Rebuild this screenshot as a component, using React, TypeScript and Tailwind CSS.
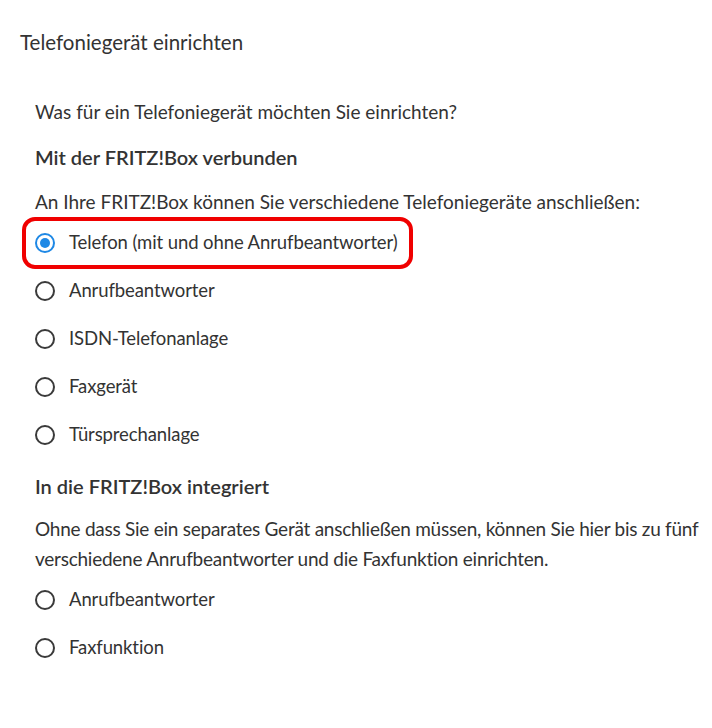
import { useState } from "react";

function Radio({ label, checked, onSelect }: { label: string; checked: boolean; onSelect: () => void }) {
  return (
    <label className="flex items-center h-[48px] cursor-pointer" onClick={onSelect}>
      <span
        className={
          "flex items-center justify-center w-[20px] h-[20px] rounded-full shrink-0 " +
          (checked ? "border-[2.5px] border-[#1e88e5]" : "border-2 border-[#3a3a3a]")
        }
      >
        {checked && <span className="w-[10px] h-[10px] rounded-full bg-[#1e88e5]" />}
      </span>
      <span className="ml-[14px] text-[18.5px] tracking-[-0.1px]">{label}</span>
    </label>
  );
}

export default function App() {
  const [selected, setSelected] = useState("telefon");

  const connected = [
    { id: "telefon", label: "Telefon (mit und ohne Anrufbeantworter)" },
    { id: "ab", label: "Anrufbeantworter" },
    { id: "isdn", label: "ISDN-Telefonanlage" },
    { id: "fax", label: "Faxgerät" },
    { id: "tuer", label: "Türsprechanlage" },
  ];

  const integrated = [
    { id: "ab-int", label: "Anrufbeantworter" },
    { id: "fax-int", label: "Faxfunktion" },
  ];

  return (
    <div className="w-[712px] h-[728px] bg-white text-[#333] font-['Lato','Liberation_Sans',sans-serif] text-[19px]">
      <h2 className="pl-[20px] pt-[30px] text-[20.5px] leading-[24px]">Telefoniegerät einrichten</h2>

      <div className="pl-[35px] pt-[46px]">
        <p className="leading-[24px]">Was für ein Telefoniegerät möchten Sie einrichten?</p>
        <h3 className="mt-[21px] text-[20px] font-semibold leading-[24px]">Mit der FRITZ!Box verbunden</h3>
        <p className="mt-[21px] leading-[24px]">An Ihre FRITZ!Box können Sie verschiedene Telefoniegeräte anschließen:</p>

        <div className="mt-[5px]">
          {connected.map((item) =>
            item.id === "telefon" ? (
              <div key={item.id} className="relative">
                <Radio label={item.label} checked={selected === item.id} onSelect={() => setSelected(item.id)} />
                {/* highlight frame */}
                <div className="absolute left-[-13px] top-[-2px] w-[391px] h-[52px] rounded-[13px] border-4 border-[#f00000] pointer-events-none" />
              </div>
            ) : (
              <Radio key={item.id} label={item.label} checked={selected === item.id} onSelect={() => setSelected(item.id)} />
            )
          )}
        </div>

        <h3 className="mt-[15px] text-[20px] font-semibold leading-[24px]">In die FRITZ!Box integriert</h3>
        <p className="mt-[16px] leading-[30px] tracking-[-0.25px]">
          Ohne dass Sie ein separates Gerät anschließen müssen, können Sie hier bis zu fünf verschiedene
          Anrufbeantworter und die Faxfunktion einrichten.
        </p>
        <div className="mt-[2px]">
          {integrated.map((item) => (
            <Radio key={item.id} label={item.label} checked={selected === item.id} onSelect={() => setSelected(item.id)} />
          ))}
        </div>
      </div>
    </div>
  );
}
